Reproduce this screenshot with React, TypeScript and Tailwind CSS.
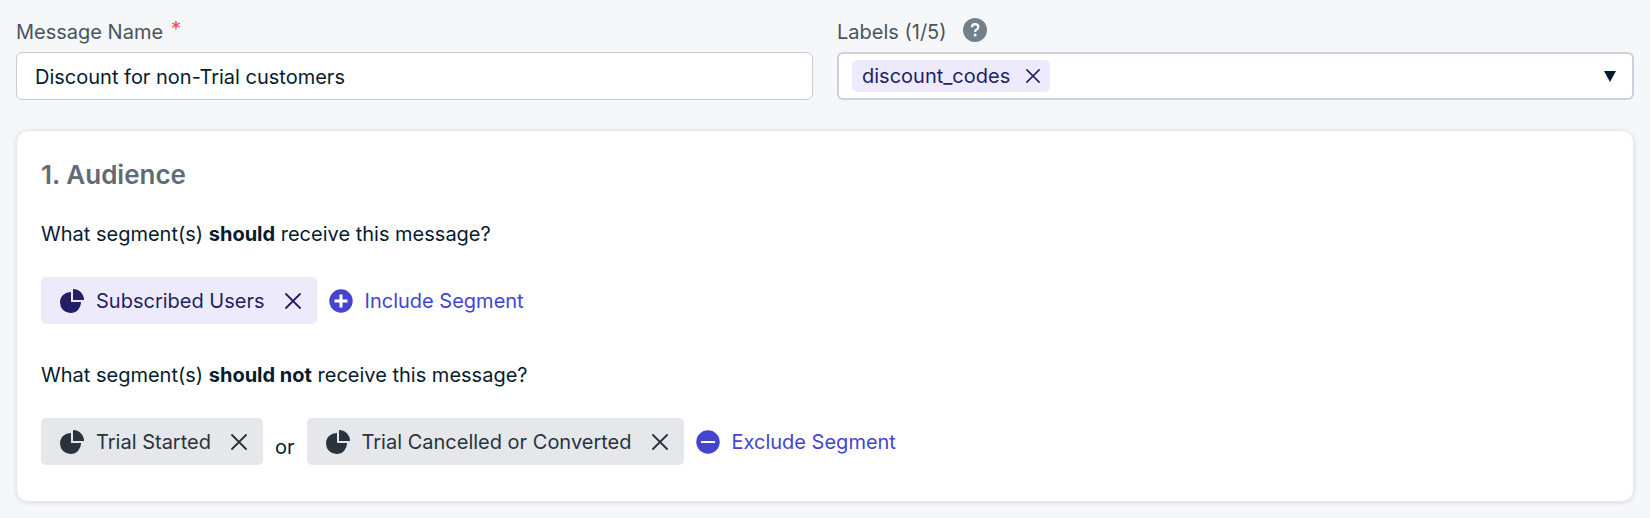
import { useState } from "react";
import type { ReactNode } from "react";

type Segment = {
  id: string;
  name: string;
};

function CloseIcon({ className }: { className: string }) {
  return (
    <svg viewBox="0 0 16 16" className={className} fill="none" stroke="currentColor" strokeWidth="1.8" strokeLinecap="round" aria-hidden>
      <path d="M1 1l14 14M15 1L1 15" />
    </svg>
  );
}

function PieIcon() {
  return (
    <svg viewBox="0 0 24 24" className="h-6 w-6 shrink-0" fill="currentColor" aria-hidden>
      <path d="M11 3v10h10A10.500 10.500 0 1 1 11 3z" />
      <path d="M13 0a11 11 0 0 1 11 11H13z" />
    </svg>
  );
}

function HelpIcon() {
  return (
    <svg viewBox="0 0 24 24" className="h-6 w-6" aria-hidden>
      <circle cx="12" cy="12" r="12" fill="#74808b" />
      <path
        d="M8.900 9.200c.1-1.900 1.300-3 3.200-3s3.200 1.100 3.200 2.700c0 1.300-.7 2-1.700 2.600-1 .6-1.400 1.100-1.400 2.100v.4"
        fill="none"
        stroke="#fff"
        strokeWidth="2.200"
      />
      <circle cx="12.100" cy="17" r="1.500" fill="#fff" />
    </svg>
  );
}

function CircleIcon({ plus = false }: { plus?: boolean }) {
  return (
    <svg viewBox="0 0 24 24" className="h-6 w-6 shrink-0" aria-hidden>
      <circle cx="12" cy="12" r="11.700" fill="#4444d1" />
      {plus ? (
        <path d="M12 5.500v13M5.500 12h13" stroke="#fff" strokeWidth="3" />
      ) : (
        <path d="M5 12h14" stroke="#fff" strokeWidth="2" />
      )}
    </svg>
  );
}

function SegmentChip({ segment, tone, onRemove }: { segment: Segment; tone: string; onRemove: () => void }) {
  return (
    <div className={`flex h-[47px] items-center rounded-[5px] pr-4 pl-[19px] ${tone}`}>
      <PieIcon />
      <span className="ml-3 whitespace-nowrap">{segment.name}</span>
      <button type="button" aria-label={`Remove ${segment.name}`} onClick={onRemove} className="ml-5 cursor-pointer">
        <CloseIcon className="h-4 w-4" />
      </button>
    </div>
  );
}

function AddButton({ icon, children }: { icon: ReactNode; children: ReactNode }) {
  return (
    <button type="button" className="flex h-[47px] cursor-pointer items-center gap-3 text-[#4444d1]">
      {icon}
      <span className="whitespace-nowrap">{children}</span>
    </button>
  );
}

export default function App() {
  const [name, setName] = useState("Discount for non-Trial customers");
  const [labels, setLabels] = useState(["discount_codes"]);
  const [included, setIncluded] = useState<Segment[]>([{ id: "subscribed", name: "Subscribed Users" }]);
  const [excluded, setExcluded] = useState<Segment[]>([
    { id: "trial-started", name: "Trial Started" },
    { id: "trial-ended", name: "Trial Cancelled or Converted" },
  ]);

  return (
    <main className="min-h-screen bg-[#f5f7f9] px-4 pt-[17px] pb-4 font-['Inter','Liberation_Sans',sans-serif] text-[20px] leading-[30px] text-[#061b2e]">
      <div className="grid grid-cols-2 gap-6">
        <div>
          <label htmlFor="message-name" className="flex h-[35px] text-[#4a545e]">
            Message Name
            <span className="ml-2 leading-6 text-[#ee4b50]">*</span>
          </label>
          <input
            id="message-name"
            type="text"
            required
            value={name}
            onChange={(e) => setName(e.target.value)}
            className="h-12 w-full rounded-[6px] border border-[#c6ced8] bg-white px-[18px] pt-0.5 outline-none focus:border-[#4444d1]"
          />
        </div>

        <div>
          <div className="flex h-[35px] items-start text-[#4a545e]">
            <span id="labels-title">Labels ({labels.length}/5)</span>
            <button type="button" aria-label="About labels" className="mt-px ml-4 cursor-pointer">
              <HelpIcon />
            </button>
          </div>
          <div
            role="group"
            aria-labelledby="labels-title"
            className="flex h-12 items-center gap-2 rounded-[6px] border-2 border-[#ccd2dc] bg-white pr-4 pl-[13px]"
          >
            {labels.map((label) => (
              <span key={label} className="flex h-8 items-center rounded-[5px] bg-[#edebfb] px-2.5 text-[#221f66]">
                {label}
                <button
                  type="button"
                  aria-label={`Remove ${label}`}
                  onClick={() => setLabels(labels.filter((l) => l !== label))}
                  className="ml-4 cursor-pointer"
                >
                  <CloseIcon className="h-3.5 w-3.5" />
                </button>
              </span>
            ))}
            <button type="button" aria-label="Show labels" className="ml-auto cursor-pointer">
              <svg viewBox="0 0 12 11" className="h-[11px] w-3" fill="#061b2e" aria-hidden>
                <path d="M0 0h12L6 11z" />
              </svg>
            </button>
          </div>
        </div>
      </div>

      <section className="mt-[30px] rounded-[12px] border border-[#e6e8ec] bg-white px-6 pt-6 pb-9 shadow-[0_1px_4px_rgba(20,30,50,0.12)]">
        <h2 className="text-[26px] leading-10 font-semibold text-[#5f6b77]">1. Audience</h2>

        <p className="mt-6">
          What segment(s) <strong className="font-bold">should</strong> receive this message?
        </p>
        <div className="mt-7 flex flex-wrap items-center gap-3">
          {included.map((segment) => (
            <SegmentChip
              key={segment.id}
              segment={segment}
              tone="bg-[#edebfb] text-[#221f66]"
              onRemove={() => setIncluded(included.filter((s) => s.id !== segment.id))}
            />
          ))}
          <AddButton icon={<CircleIcon plus />}>Include Segment</AddButton>
        </div>

        <p className="mt-9">
          What segment(s) <strong className="font-bold">should not</strong> receive this message?
        </p>
        <div className="mt-7 flex flex-wrap items-center gap-3">
          {excluded.map((segment, i) => (
            <div key={segment.id} className="flex items-center gap-3">
              {i > 0 ? <span className="pt-2.5">or</span> : null}
              <SegmentChip
                segment={segment}
                tone="bg-[#e6e7eb] text-[#28333e]"
                onRemove={() => setExcluded(excluded.filter((s) => s.id !== segment.id))}
              />
            </div>
          ))}
          <AddButton icon={<CircleIcon />}>Exclude Segment</AddButton>
        </div>
      </section>
    </main>
  );
}
